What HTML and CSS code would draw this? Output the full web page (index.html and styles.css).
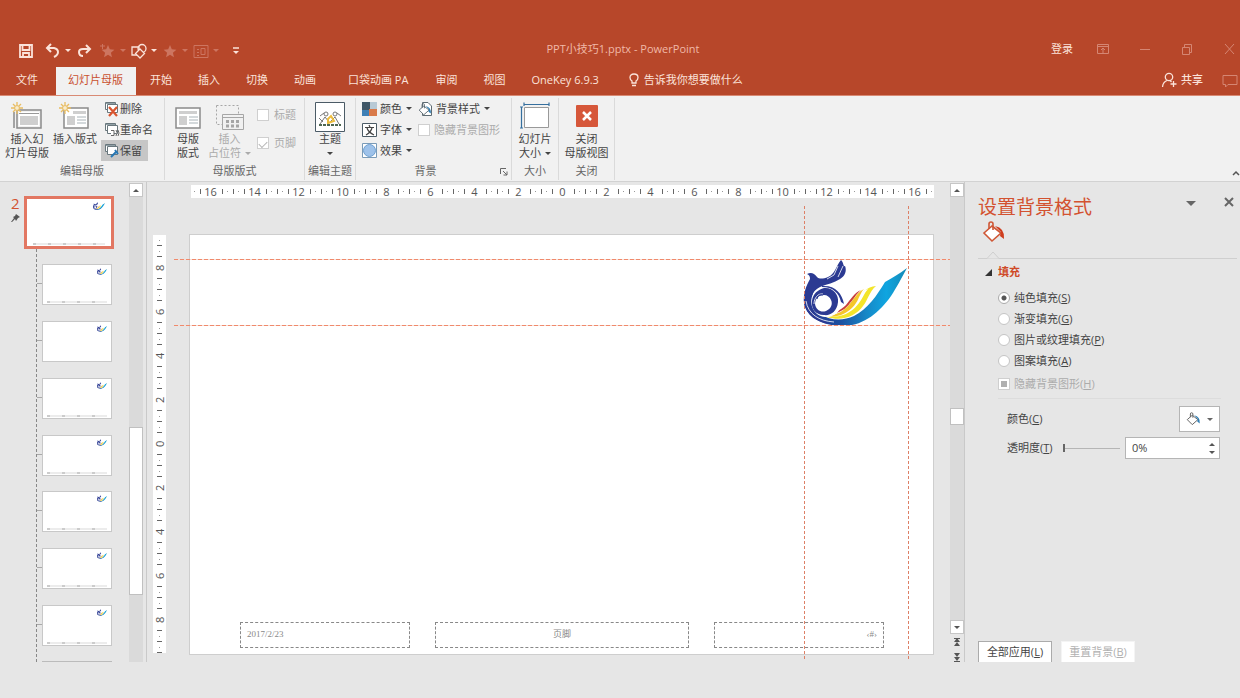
FILE: index.html
```html
<!DOCTYPE html>
<html lang="zh-CN">
<head>
<meta charset="utf-8">
<title>PPT小技巧1.pptx - PowerPoint</title>
<link rel="stylesheet" href="styles.css">
</head>
<body>
<svg class="defs" width="0" height="0" aria-hidden="true">
  <defs>
    <linearGradient id="sea" x1="0" x2="1" y1="0" y2="0">
      <stop offset="0" stop-color="#2b3a92"/><stop offset=".35" stop-color="#1c4f9f"/><stop offset=".6" stop-color="#1787c6"/><stop offset=".8" stop-color="#0fa5e0"/><stop offset="1" stop-color="#1689b5"/>
    </linearGradient>
    <symbol id="logo" viewBox="0 0 104 68">
      <path fill="url(#sea)" d="M104 9C96 15 89 19 82 23C74 36 65 50 51 57C40 62 28 62 17 55C9 49 7 38 12 30C5 33 1 38 1 44C3 58 21 68 42 67C61 66 77 53 88 37C94 28 98 20 104 9Z"/>
      <path fill="#f3e52a" d="M73 27C64 28 58 34 53 40C46 50 36 57 24 58C39 63 53 57 60 47C65 41 66 33 73 27Z"/>
      <path fill="#fff" d="M65 30C57 32 53 42 45 49C39 55 32 57 25 57C40 60 51 51 56 44C60 39 61 34 65 30Z"/>
      <path fill="#f5c62b" d="M61 30C54 33 50 42 44 48C38 54 30 57 22 56C36 61 48 52 53 44C56 40 57 34 61 30Z"/>
      <path fill="#c9403a" d="M58 31C51 34 48 40 43 46C36 53 28 55 19 54C33 58 43 50 47 44C51 40 53 35 58 31Z"/>
      <path fill="#2b3a92" d="M4 15C8 13 11 14 14 18C16 20 20 20 25 18C32 15 33 7 38 1C41 4 40 8 42 7C44 12 42 17 37 20C31 24 24 25 17 28C9 32 6 40 8 48C10 56 20 62 28 65C14 64 3 56 1 44C0 35 3 27 7 20C7 17 6 16 4 15Z"/>
      <path fill="#fff" d="M24 27C9 28 4 43 12 53C17 59 27 60 34 54C41 47 38 29 24 27Z"/>
      <path fill="#2b3a92" fill-rule="evenodd" d="M21 29C30 28 36 36 35 43C34 53 27 57 21 56C12 56 8 49 9 42C10 34 15 31 21 29ZM21 36C15 36 12 40 12 45C13 51 18 54 23 52C28 50 30 45 28 41C27 38 24 36 21 36Z"/>
      <path fill="#2b3a92" d="M19 27C32 26 39 34 41 45L38 43C36 34 30 28 19 28Z"/>
      <path fill="none" stroke="#fff" stroke-width=".8" d="M3 42C5 55 16 62 31 63M35 7L31 16L24 20M40 7L35 18M11 45C11 39 15 34 20 35"/>
      <path fill="none" stroke="#2b3a92" stroke-width="1" d="M14 40Q15 35 20 36"/>
    </symbol>
    <symbol id="sun" viewBox="0 0 12 12"><path stroke="#e9bd62" stroke-width="1.3" d="M6 0V12M0 6H12M2 2L10 10M10 2L2 10"/><circle cx="6" cy="6" r="2.4" fill="#f7ecd0" stroke="#e9bd62"/></symbol>
    <symbol id="star" viewBox="0 0 16 16"><path fill="currentColor" d="M8 2L9.8 6.3L14.4 6.7L10.9 9.7L12 14.2L8 11.8L4 14.2L5.1 9.7L1.6 6.7L6.2 6.3Z"/></symbol>
    <symbol id="bucket" viewBox="0 0 24 22">
      <path fill="#fff" stroke="currentColor" stroke-width="1.6" d="M10 5L19 12L10 20L2 12Z"/>
      <path fill="none" stroke="currentColor" stroke-width="1.6" d="M7 8V3Q7 1 9 1T11 3V9"/>
      <path class="paint" d="M13 5Q23 7 22 18L18 15L19 11Z"/>
    </symbol>
    <symbol id="pages" viewBox="0 0 16 16"><path fill="#fff" stroke="#69777d" d="M1.5 1.5H11.5V8.5H1.5Z"/><path fill="#fff" stroke="#69777d" d="M3.5 3.5H13.5V11.5H3.5Z"/><path stroke="#91a0a6" d="M2 2.5H11"/></symbol>
  </defs>
</svg>

<header class="header">
  <div class="titlebar">
    <div class="qat">
      <button class="save" aria-label="保存"><svg width="16" height="16" fill="none" stroke="currentColor" stroke-width="1.8"><path d="M2 2H14V14H2ZM4.500 2V7H11.500V2M5 14V10H11V14"/></svg></button>
      <button aria-label="撤消"><svg width="16" height="16" fill="none" stroke="currentColor" stroke-width="2"><path d="M6 1L2 5L6 9M2.500 5H9Q13 6 13 9T9 14"/></svg><i class="caret"></i></button>
      <button class="redo" aria-label="恢复"><svg width="16" height="16" fill="none" stroke="currentColor" stroke-width="2"><path d="M10 2L14 6L10 10M14 6H7Q3 6 3 9Q3 13 7 13"/></svg></button>
      <button class="dim" aria-label="添加动画"><svg width="16" height="16"><use href="#star"/><path stroke="currentColor" d="M0 3H5M2.500 1V6"/></svg><i class="caret"></i></button>
      <button aria-label="形状"><svg width="16" height="16" fill="none" stroke="currentColor" stroke-width="1.300"><path d="M1 4H8V12H1Z"/><circle cx="11" cy="5.500" r="4"/><path fill="#b7472a" d="M9 6L13.500 10.500L9 15L4.500 10.500Z"/></svg><i class="caret"></i></button>
      <button class="dim" aria-label="动画"><svg width="16" height="16"><use href="#star"/></svg><i class="caret"></i></button>
      <button class="dim" aria-label="窗格"><svg width="16" height="16" fill="none" stroke="currentColor"><path d="M1 2.500H15V14.500H1ZM4 6.500H6M4 9.500H6M4 12.500H6M8 5.500H12V11.500H8Z"/></svg><i class="caret"></i></button>
      <button class="more" aria-label="自定义"><svg width="10" height="10"><path stroke="currentColor" stroke-width="1.500" d="M2 2H8"/><path fill="currentColor" d="M2 5H8L5 8Z"/></svg></button>
    </div>
    <div class="title">PPT小技巧1.pptx - PowerPoint</div>
    <div class="winctl">
      <a href="#">登录</a>
      <div class="winbtns">
        <button aria-label="功能区选项"><svg width="12" height="12" fill="none" stroke="currentColor"><path d="M.5 1.500H11.500V10.500H.5ZM.5 3.500H11.500M6 10V5M4 7L6 5L8 7"/></svg></button>
        <button aria-label="最小化"><svg width="12" height="12"><path stroke="currentColor" d="M1 6.500H11"/></svg></button>
        <button aria-label="还原"><svg width="12" height="12" fill="none" stroke="currentColor"><path d="M1.500 4.500H8.500V11.500H1.500ZM3.500 4V1.500H10.500V9.500H9"/></svg></button>
        <button aria-label="关闭"><svg width="12" height="12"><path stroke="currentColor" d="M2 1L11 11M11 1L2 11"/></svg></button>
      </div>
    </div>
  </div>
  <nav class="tabs">
    <button class="file">文件</button><button class="active">幻灯片母版</button><button>开始</button><button>插入</button><button>切换</button><button>动画</button><button class="addin">口袋动画 PA</button><button>审阅</button><button>视图</button><button>OneKey 6.9.3</button>
    <button class="tell"><svg width="12" height="14" fill="none" stroke="currentColor" stroke-width="1.300"><path d="M4 10V8Q2 7 2 4.500Q2 1 6 1T10 4.500Q10 7 8 8V10ZM4 12.500H8"/></svg>告诉我你想要做什么</button>
    <button class="share"><svg width="16" height="16" fill="none" stroke="currentColor" stroke-width="1.300"><circle cx="8" cy="5" r="3.700"/><path d="M1.500 15Q2 10 6 8.500M9 8.500L10.500 10M12.500 9V15M9.500 12H15.500"/></svg>共享</button>
    <button class="comment" aria-label="批注"><svg width="16" height="14" fill="none" stroke="currentColor"><path d="M1 1.500H15V10.500H6L3.500 13V10.500H1Z"/></svg></button>
  </nav>
</header>

<section class="ribbon">
  <div class="group g-edit">
    <div class="tools">
      <button class="big"><svg width="32" height="28" fill="none"><path stroke="#8b8b8b" stroke-width="1.500" d="M3 10V26M6 8H30V26H6Z"/><path fill="#fff" d="M8 10H28V24H8Z"/><path stroke="#999" d="M8 11.500H28"/><path fill="#cfcfcf" d="M9 14H27V23H9Z"/><use href="#sun" width="12" height="12"/></svg><span>插入幻<br>灯片母版</span></button>
      <button class="big"><svg width="32" height="28" fill="none"><path fill="#fff" stroke="#8b8b8b" stroke-width="1.500" d="M5 6H29V26H5Z"/><path fill="#cfcfcf" d="M14 9H27V12H14ZM8 14H16V23H8Z"/><path stroke="#a9b3b8" d="M18 15H27M18 18H27M18 21H27"/><use href="#sun" width="12" height="12"/></svg><span>插入版式</span></button>
      <div class="stack">
        <button><svg width="16" height="16"><use href="#pages"/><path stroke="#d9552f" stroke-width="2.200" d="M5 6L13 15M13 6L5 15"/></svg>删除</button>
        <button><svg width="16" height="16" fill="none"><use href="#pages"/><path fill="#fff" stroke="#666" d="M7 8.500H10V13.500H7M12 8Q14 10 12 14M14 8Q16 11 14 14"/></svg>重命名</button>
        <button class="on"><svg width="16" height="16"><use href="#pages"/><path stroke="#2878b5" stroke-width="2" d="M7 14L13 8M11 7L14 11"/></svg>保留</button>
      </div>
    </div>
    <div class="caption">编辑母版</div>
  </div>
  <div class="group g-layout">
    <div class="tools">
      <button class="big"><svg width="28" height="28"><path fill="#fff" stroke="#8b8b8b" stroke-width="1.500" d="M2 6H26V26H2Z"/><path fill="#cfcfcf" d="M5 9H23V12H5ZM5 14H13V23H5Z"/><path stroke="#a9b3b8" d="M15 15H24M15 18H24M15 21H24"/></svg><span>母版<br>版式</span></button>
      <button class="big off"><svg width="28" height="28" fill="none" stroke="#a6a6a6"><path stroke-dasharray="2 2" d="M.5 3.500H22.500V22.500H.5Z"/><path fill="#f1f1f1" d="M6.500 12.500H27.500V27.500H6.500ZM6.500 15.500H27.500"/><path stroke-width="3" stroke-dasharray="3 2" d="M10 19.500H25M10 24H25"/></svg><span>插入<br>占位符<i class="caret"></i></span></button>
      <div class="checks">
        <label class="off"><input type="checkbox" disabled>标题</label>
        <label class="off"><input type="checkbox" checked disabled>页脚</label>
      </div>
    </div>
    <div class="caption">母版版式</div>
  </div>
  <div class="group g-theme">
    <div class="tools">
      <button class="big"><svg width="30" height="30" fill="none"><path fill="#fff" stroke="#4b5b66" d="M.5.5H29.500V29.500H.5Z"/><g stroke="#777"><circle cx="11" cy="12" r="2"/><circle cx="20" cy="12" r="2"/><path d="M5 22L10 15L14 20M9 11L5 14M24 22L20 15L15 20M22 11L26 14M4 16L8 20"/></g><path stroke="#edbd3e" stroke-width="2" d="M13 17L16 14L19 19L13 21Z"/><path stroke="#4f6751" stroke-width="2" stroke-dasharray="3 1" d="M4 23H26"/></svg><span>主题</span><i class="caret"></i></button>
    </div>
    <div class="caption">编辑主题</div>
  </div>
  <div class="group g-bg">
    <div class="tools">
      <div class="stack">
        <button><svg width="16" height="16"><path fill="#3f5666" d="M0 1H8V9H0Z"/><path fill="#b8c9d5" d="M8 1H15V8H8Z"/><path fill="#3d7fb5" d="M0 9H8V15H0Z"/><path fill="#d97a4a" d="M7 8H15V15H7Z"/></svg>颜色<i class="caret"></i></button>
        <button><svg width="16" height="16" fill="none"><path fill="#fff" stroke="#4b5b66" d="M.5 1.500H14.500V14.500H.5Z"/><path stroke="#444" stroke-width="1.200" d="M3 5.500H12M7 3L8 5M4 13Q9 10 10 6M5 6Q6 10 12 13"/></svg>字体<i class="caret"></i></button>
        <button><svg width="16" height="16"><path fill="#fff" stroke="#7a9bb8" d="M.5.5H14.500V14.500H.5Z"/><circle cx="7.500" cy="7.500" r="6" fill="#9ec2ea" stroke="#6fa0d0"/></svg>效果<i class="caret"></i></button>
      </div>
      <div class="stack">
        <button class="bgstyle"><svg width="16" height="16"><path fill="#fff" stroke="#5d6b73" d="M4.500 1.500H10L13.500 5V14.500H4.500Z"/><use href="#bucket" y="2" width="14" height="13"/></svg>背景样式<i class="caret"></i></button>
        <label class="off"><input type="checkbox" disabled>隐藏背景图形</label>
      </div>
      <button class="launcher" aria-label="背景设置"><svg width="8" height="8" fill="none" stroke="#666"><path d="M.5 6V.5H6M3 3L7 7M7 3.500V7H3.500"/></svg></button>
    </div>
    <div class="caption bgcap">背景</div>
  </div>
  <div class="group g-size">
    <div class="tools">
      <button class="big"><svg width="30" height="28"><path fill="#fff" stroke="#999" d="M4.500 5.500H28.500V25.500H4.500Z"/><path stroke="#356f9e" stroke-width="1.200" d="M4 2.500H29M4 .5V4M29 .5V4M1.500 5V26M0 5H3M0 26H3"/></svg><span>幻灯片<br>大小<i class="caret"></i></span></button>
    </div>
    <div class="caption">大小</div>
  </div>
  <div class="group g-close">
    <div class="tools">
      <button class="big"><svg width="22" height="28"><rect y="3" width="22" height="22" rx="1" fill="#d6573a"/><path stroke="#fff" stroke-width="2.500" d="M7 10L15 18M15 10L7 18"/></svg><span>关闭<br>母版视图</span></button>
    </div>
    <div class="caption">关闭</div>
  </div>
  <button class="collapse" aria-label="折叠功能区"><svg width="8" height="6" fill="none"><path stroke="#555" stroke-width="1.500" d="M1 5L4 2L7 5"/></svg></button>
</section>

<main class="workspace">
  <aside class="nav">
    <div class="index"><span>2</span><svg width="10" height="10"><path fill="#555" d="M5 1L9 4L7 5L5 8L4 6L1 9L0 9L3 5L2 4L4 3Z"/></svg></div>
    <div class="slides">
      <button class="thumb master" aria-label="母版"><svg width="12" height="8"><use href="#logo"/></svg><i class="foot"></i></button>
      <ul class="layouts">
        <li><button class="thumb" aria-label="版式 1"><svg width="10" height="7"><use href="#logo"/></svg><i class="foot"></i></button></li>
        <li><button class="thumb" aria-label="版式 2"><svg width="10" height="7"><use href="#logo"/></svg></button></li>
        <li><button class="thumb" aria-label="版式 3"><svg width="10" height="7"><use href="#logo"/></svg><i class="foot"></i></button></li>
        <li><button class="thumb" aria-label="版式 4"><svg width="10" height="7"><use href="#logo"/></svg><i class="foot"></i></button></li>
        <li><button class="thumb" aria-label="版式 5"><svg width="10" height="7"><use href="#logo"/></svg><i class="foot"></i></button></li>
        <li><button class="thumb" aria-label="版式 6"><svg width="10" height="7"><use href="#logo"/></svg><i class="foot"></i></button></li>
        <li><button class="thumb" aria-label="版式 7"><svg width="10" height="7"><use href="#logo"/></svg><i class="foot"></i></button></li>
      </ul>
    </div>
    <div class="scroll nav-scroll"><span class="arrow up"></span><span class="track before"></span><span class="knob"></span><span class="track after"></span></div>
  </aside>

  <section class="editor">
    <div class="vruler"><b class="end"></b><b>8</b><b>6</b><b>4</b><b>2</b><b>0</b><b>2</b><b>4</b><b>6</b><b>8</b><b class="end"></b></div>
    <div class="stage">
      <div class="hruler"><b>16</b><b>14</b><b>12</b><b>10</b><b>8</b><b>6</b><b>4</b><b>2</b><b>0</b><b>2</b><b>4</b><b>6</b><b>8</b><b>10</b><b>12</b><b>14</b><b>16</b></div>
      <div class="slide">
        <svg class="brand" viewBox="0 0 104 68"><use href="#logo"/></svg>
        <div class="holders"><div>2017/2/23</div><div class="mid">页脚</div><div class="num">‹#›</div></div>
      </div>
      <i class="guide v one"></i><i class="guide v two"></i><i class="guide h one"></i><i class="guide h two"></i>
    </div>
    <div class="scroll main-scroll"><span class="arrow up"></span><span class="track before"></span><span class="knob"></span><span class="track after"></span><span class="arrow down"></span>
      <svg width="14" height="28" fill="#555"><path d="M7 4L10 8H4ZM7 8L10 12H4ZM7 23L4 19H10ZM7 27L4 23H10Z"/><path stroke="#555" d="M4 4.500H10M4 27.500H10"/></svg>
    </div>
  </section>

  <aside class="pane">
    <div class="pane-head"><h1>设置背景格式</h1><button aria-label="任务窗格选项"><i class="caret"></i></button><button aria-label="关闭窗格"><svg width="10" height="10"><path stroke="currentColor" stroke-width="2" d="M1 1L9 9M9 1L1 9"/></svg></button></div>
    <div class="pane-tab"><svg class="fillicon" width="24" height="22"><use href="#bucket"/></svg></div>
    <svg class="notch" width="20" height="8"><path fill="#e6e6e6" stroke="#cfcfcf" d="M0 7.500H4L10 1L16 7.500H20"/></svg>
    <h2><svg width="7" height="7"><path d="M7 0V7H0Z"/></svg>填充</h2>
    <div class="options">
      <label><input type="radio" name="fill" checked><span>纯色填充(<u>S</u>)</span></label>
      <label><input type="radio" name="fill"><span>渐变填充(<u>G</u>)</span></label>
      <label><input type="radio" name="fill"><span>图片或纹理填充(<u>P</u>)</span></label>
      <label><input type="radio" name="fill"><span>图案填充(<u>A</u>)</span></label>
      <label class="off"><input type="checkbox" class="mixed" disabled><span>隐藏背景图形(<u>H</u>)</span></label>
    </div>
    <div class="row"><label for="color">颜色(<u>C</u>)</label><button id="color" class="swatch"><svg width="15" height="14"><use href="#bucket"/></svg><i class="caret"></i></button></div>
    <div class="row last"><label for="alpha">透明度(<u>T</u>)</label><input id="alpha" type="range" value="0"><span class="spin"><input type="text" value="0%" aria-label="透明度数值"><span class="steps"><button aria-label="增加"></button><button aria-label="减少"></button></span></span></div>
    <div class="actions"><button>全部应用(<u>L</u>)</button><button disabled>重置背景(<u>B</u>)</button></div>
  </aside>
</main>
</body>
</html>
```
FILE: styles.css
```css
* { box-sizing: border-box; }
body {
  margin: 0;
  min-height: 100vh;
  padding-bottom: 36px;
  display: flex;
  flex-direction: column;
  background: #e6e6e6;
  color: #444;
  font: 11px/14px "Open Sans", "Noto Sans CJK SC", sans-serif;
}
button, input { font: inherit; color: inherit; }
button { background: none; border: 0; padding: 0; margin: 0; white-space: nowrap; }
svg { display: block; flex: none; }
.defs { position: absolute; }
.caret {
  display: inline-block;
  flex: none;
  border: 3px solid transparent;
  border-top-color: currentColor;
  border-bottom: 0;
}

/* title bar and tabs */
.header { background: #b7472a; color: #fbe3da; padding-top: 34px; }
.titlebar { height: 33px; display: grid; grid-template-columns: 1fr auto 1fr; align-items: center; }
.qat { display: flex; align-items: center; gap: 3px; padding-left: 18px; }
.qat button { display: flex; align-items: center; gap: 4px; padding-right: 2px; }
.qat .caret { width: 6px; }
.qat .save { margin-right: 6px; }
.qat .redo { margin-right: 3px; }
.qat .more { margin-left: 7px; }
.qat .dim { color: #cd7560; }
.title { padding: 0 0 4px 6px; color: #f0b9a8; }
.winctl { display: flex; justify-content: flex-end; align-items: center; gap: 24px; padding: 0 5px 4px 0; }
.winctl a { color: #fbe3da; text-decoration: none; }
.winbtns { display: flex; gap: 30px; color: #d58673; }
.tabs { display: flex; height: 29px; border-bottom: 1px solid #d98a74; }
.tabs button { padding: 0 13px 2px; }
.tabs .file { padding-left: 16px; padding-right: 18px; }
.tabs .active { background: #f1f1f1; color: #c9502f; padding-left: 12px; }
.tabs .addin { margin-left: 6px; }
.tabs .addin + button { margin-left: 1px; }
.tabs .active + button { margin-left: 1px; }
.tabs .tell, .tabs .share { display: flex; align-items: center; gap: 4px; }
.tabs .tell { margin-left: 3px; }
.tabs .share { margin-left: auto; padding-right: 19px; font-weight: 500; }
.tabs .comment { padding: 0 2px 0 0; color: #d58673; }

/* ribbon */
.ribbon { display: flex; background: #f1f1f1; border-bottom: 1px solid #d2d2d2; height: 86px; padding: 2px 0 1px; }
.group { display: flex; flex-direction: column; flex: none; border-right: 1px solid #dadada; }
.tools { flex: 1; display: flex; align-items: flex-start; position: relative; }
.caption { text-align: center; line-height: 18px; color: #666; }
.big { display: flex; flex-direction: column; align-items: center; padding-top: 4px; line-height: 14px; }
.big svg { margin-bottom: 2px; height: 28px; }
.big .caret { margin-top: 6px; }
.big span .caret { margin: 0 0 2px 4px; }
.stack { display: flex; flex-direction: column; }
.stack button, .stack label { display: flex; align-items: center; gap: 2px; height: 21px; }
.stack .caret, .row .caret { margin-left: 2px; }
.off { color: #ababab; }
.g-edit { width: 165px; }
.g-edit .tools { padding-left: 5px; gap: 4px; }
.g-edit .stack button { padding: 0 6px 0 3px; gap: 0; }
.g-edit .stack .on { background: #c6c6c6; align-self: flex-start; }
.g-layout { width: 140px; }
.g-layout .tools { padding-left: 9px; gap: 6px; }
.checks { display: flex; flex-direction: column; gap: 14px; padding: 10px 0 0 0; }
.checks label { display: flex; align-items: center; gap: 5px; white-space: nowrap; }
.g-theme { width: 51px; }
.g-theme .tools, .g-size .tools, .g-close .tools { justify-content: center; }
.g-theme .big svg { height: 30px; margin-bottom: 0; }
.g-bg { width: 156px; }
.g-bg .tools { padding-left: 6px; gap: 6px; }
.g-bg .stack label { gap: 4px; }
.bgcap { padding-right: 16px; }
.bgstyle svg { color: #5d6b73; }
.launcher { position: absolute; right: 3px; bottom: -14px; }
.g-size { width: 47px; }
.g-close { width: 56px; }
.collapse { margin-left: auto; align-self: flex-end; padding-bottom: 4px; }
input[type="checkbox"], input[type="radio"] {
  appearance: none;
  flex: none;
  width: 12px;
  height: 12px;
  margin: 0;
  background: #fff;
  border: 1px solid #cfcfcf;
}
input[type="checkbox"]:checked { display: grid; place-items: center; }
input[type="checkbox"]:checked::before {
  content: "";
  width: 7px;
  height: 4px;
  border: solid #b5b5b5;
  border-width: 0 0 1px 1px;
  transform: rotate(-45deg);
}

/* workspace */
.workspace { flex: 1; display: grid; grid-template-columns: 147px 1fr 275px; }
.nav { display: flex; border-right: 1px solid #c9c9c9; padding-right: 3px; }
.index { width: 24px; padding: 13px 4px 0 11px; color: #d35230; font-size: 15px; line-height: 16px; }
.index svg { margin-top: 2px; }
.slides { flex: 1; display: flex; flex-direction: column; padding-top: 14px; }
.thumb { display: flex; flex-direction: column; align-items: flex-end; justify-content: space-between; background: #fff; border: 1px solid #c8c8c8; width: 70px; height: 41px; padding: 3px 4px 1px; }
.thumb.master { width: 90px; height: 53px; border: 3px solid #e27762; padding: 3px 6px 1px; flex: none; }
.foot { align-self: stretch; height: 2px; background: repeating-linear-gradient(90deg, #ccc 0 3px, #ececec 3px 15px); }
.layouts { list-style: none; margin: 0 0 0 12px; padding: 15px 0 0; flex: 1; display: grid; grid-auto-rows: 1fr; border-left: 1px dashed #888; }
.layouts li { display: flex; align-items: flex-start; }
.layouts li::before { content: ""; width: 5px; margin-top: 19px; border-top: 1px solid #aaa; }
.layouts li:last-child { background: linear-gradient(#bbb, #bbb) 5px 100% / 70px 1px no-repeat; }

.scroll { display: flex; flex-direction: column; width: 14px; }
.track { background: #dadada; }
.knob { background: #fff; border: 1px solid #c0c0c0; }
.arrow { flex: none; height: 14px; background: #fff; border: 1px solid #c6c6c6; display: grid; place-items: center; }
.arrow::before { content: ""; border: 3px solid transparent; }
.arrow.up::before { border-bottom-color: #555; border-top: 0; }
.arrow.down::before { border-top-color: #555; border-bottom: 0; }
.nav-scroll { padding-top: 1px; }
.nav-scroll .before { flex: 231; }
.nav-scroll .knob { flex: 168; }
.nav-scroll .after { flex: 67; }

.editor { display: flex; padding-left: 6px; border-right: 1px solid #c9c9c9; min-width: 0; }
.vruler, .hruler { display: flex; justify-content: center; align-items: center; background: #fff; color: #555; font-size: 11px; }
.hruler { overflow-x: clip; }
.vruler b, .hruler b { flex: none; width: 44px; line-height: 16px; font-weight: 400; text-align: center;
  background:
    linear-gradient(#666, #666) 0 50% / 1px 5px no-repeat,
    linear-gradient(#666, #666) 11px 50% / 1px 5px no-repeat,
    linear-gradient(#666, #666) 33px 50% / 1px 5px no-repeat,
    linear-gradient(#999, #999) 5px 50% / 1px 1px no-repeat,
    linear-gradient(#999, #999) 38px 50% / 1px 1px no-repeat; }
.vruler { width: 13px; margin: 53px 0 9px; flex-direction: column; contain: size; }
.vruler b { width: 16px; height: 44px; writing-mode: vertical-rl; transform: rotate(180deg);
  background:
    linear-gradient(#666, #666) 50% 0 / 5px 1px no-repeat,
    linear-gradient(#666, #666) 50% 11px / 5px 1px no-repeat,
    linear-gradient(#666, #666) 50% 33px / 5px 1px no-repeat,
    linear-gradient(#999, #999) 50% 5px / 1px 1px no-repeat,
    linear-gradient(#999, #999) 50% 38px / 1px 1px no-repeat; }
.vruler .end { height: 11px; background-size: 5px 1px, 0 0, 0 0, 1px 1px, 0 0; }
.stage { flex: 1; min-width: 0; position: relative; display: flex; flex-direction: column; padding: 3px 16px 7px 23px; }
.hruler { height: 13px; margin-left: 2px; }
.slide { flex: 1; margin-top: 36px; background: #fff; border: 1px solid #cecece; position: relative; display: flex; flex-direction: column; justify-content: flex-end; }
.brand { position: absolute; width: 14%; top: 24px; right: 26px; }
.holders { display: grid; grid-template-columns: 2fr 3fr 2fr; gap: 25px; padding: 0 49px 6px 50px; }
.holders div { border: 1px dashed #888; height: 26px; padding: 0 6px; font: 9px/22px "Liberation Serif", "Noto Sans CJK SC", serif; color: #888; }
.holders .mid { text-align: center; }
.holders .num { text-align: right; }
.guide { position: absolute; }
.guide.v { top: 24px; bottom: 2px; width: 1px; background: repeating-linear-gradient(180deg, #dd8066 0 3px, transparent 3px 5px); }
.guide.h { left: 8px; right: 0; height: 1px; background: repeating-linear-gradient(90deg, #f08a6c 0 4px, #f6ddd5 4px 6px); }
.guide.v.one { right: 145px; }
.guide.v.two { right: 41px; }
.guide.h.one { top: 77px; }
.guide.h.two { top: 143px; }
.main-scroll { padding-top: 1px; }
.main-scroll .before { flex: 212; }
.main-scroll .knob { flex: 0 0 17px; }
.main-scroll .after { flex: 195; }

/* task pane */
.pane { display: flex; flex-direction: column; padding: 15px 0 0 13px; }
.pane-head { display: flex; align-items: flex-start; height: 22px; color: #666; }
.pane-head h1 { margin: 0 auto 0 0; font-size: 19px; line-height: 20px; font-weight: 400; color: #d35230; }
.pane-head button { height: 10px; margin-right: 6px; }
.pane-head button:nth-of-type(1) { margin-right: 28px; }
.pane-head .caret { border-width: 5px 5px 0; display: block; margin-top: 3px; }
.pane-tab { height: 40px; padding: 2px 0 0 4px; border-bottom: 1px solid #cfcfcf; margin-right: 3px; }
.fillicon { color: #cf5736; --paint: #cf3d1e; }
.paint { fill: var(--paint, #2f7fb5); }
.notch { margin: -8px 0 0 5px; }
.pane h2 { display: flex; align-items: center; gap: 6px; margin: 5px 0 0 7px; font-size: 11px; line-height: 16px; color: #cf4a28; }
.pane h2 svg { fill: #333; }
.options { display: flex; flex-direction: column; gap: 7px; margin: 11px 19px 0 20px; padding-bottom: 7px; border-bottom: 1px solid #dcdcdc; }
.options label { display: flex; align-items: center; gap: 4px; }
.options .off { margin-top: 2px; }
input[type="radio"] { border-radius: 50%; border-color: #c5c5c5; }
input[type="radio"]:checked { border-color: #aaa; background: #fff radial-gradient(#555 2px, #fff 3px); }
input.mixed { background: linear-gradient(#b0b0b0, #b0b0b0) 50% / 6px 6px no-repeat #fff; }
.row { display: flex; align-items: center; justify-content: space-between; margin: 7px 20px 0 29px; }
.row.last { margin-top: 5px; }
.swatch { display: flex; align-items: center; justify-content: center; gap: 4px; width: 41px; height: 26px; background: #fff; border: 1px solid #b5b5b5; color: #666; }
.row input[type="range"] { appearance: none; flex: 1; min-width: 0; height: 8px; margin: 0 5px 0 10px; background: linear-gradient(#b5b5b5, #b5b5b5) 0 50% / 100% 1px no-repeat; }
.row input[type="range"]::-webkit-slider-thumb { appearance: none; width: 2px; height: 8px; background: #666; }
.spin { display: flex; width: 95px; height: 22px; background: #fff; border: 1px solid #b5b5b5; }
.spin input { flex: 1; min-width: 0; border: 0; padding: 0 6px; background: none; }
.steps { display: flex; flex-direction: column; justify-content: center; gap: 5px; padding-right: 4px; }
.steps button { border: 3px solid transparent; border-top: 0; border-bottom-color: #555; }
.steps button + button { border-top: 3px solid #555; border-bottom: 0; }
.actions { display: flex; gap: 9px; margin-top: auto; }
.actions button { width: 74px; height: 21px; background: #fff; border: 1px solid #ababab; border-bottom: 0; }
.actions button:disabled { color: #b0b0b0; border-color: #f4f4f4; }
```
